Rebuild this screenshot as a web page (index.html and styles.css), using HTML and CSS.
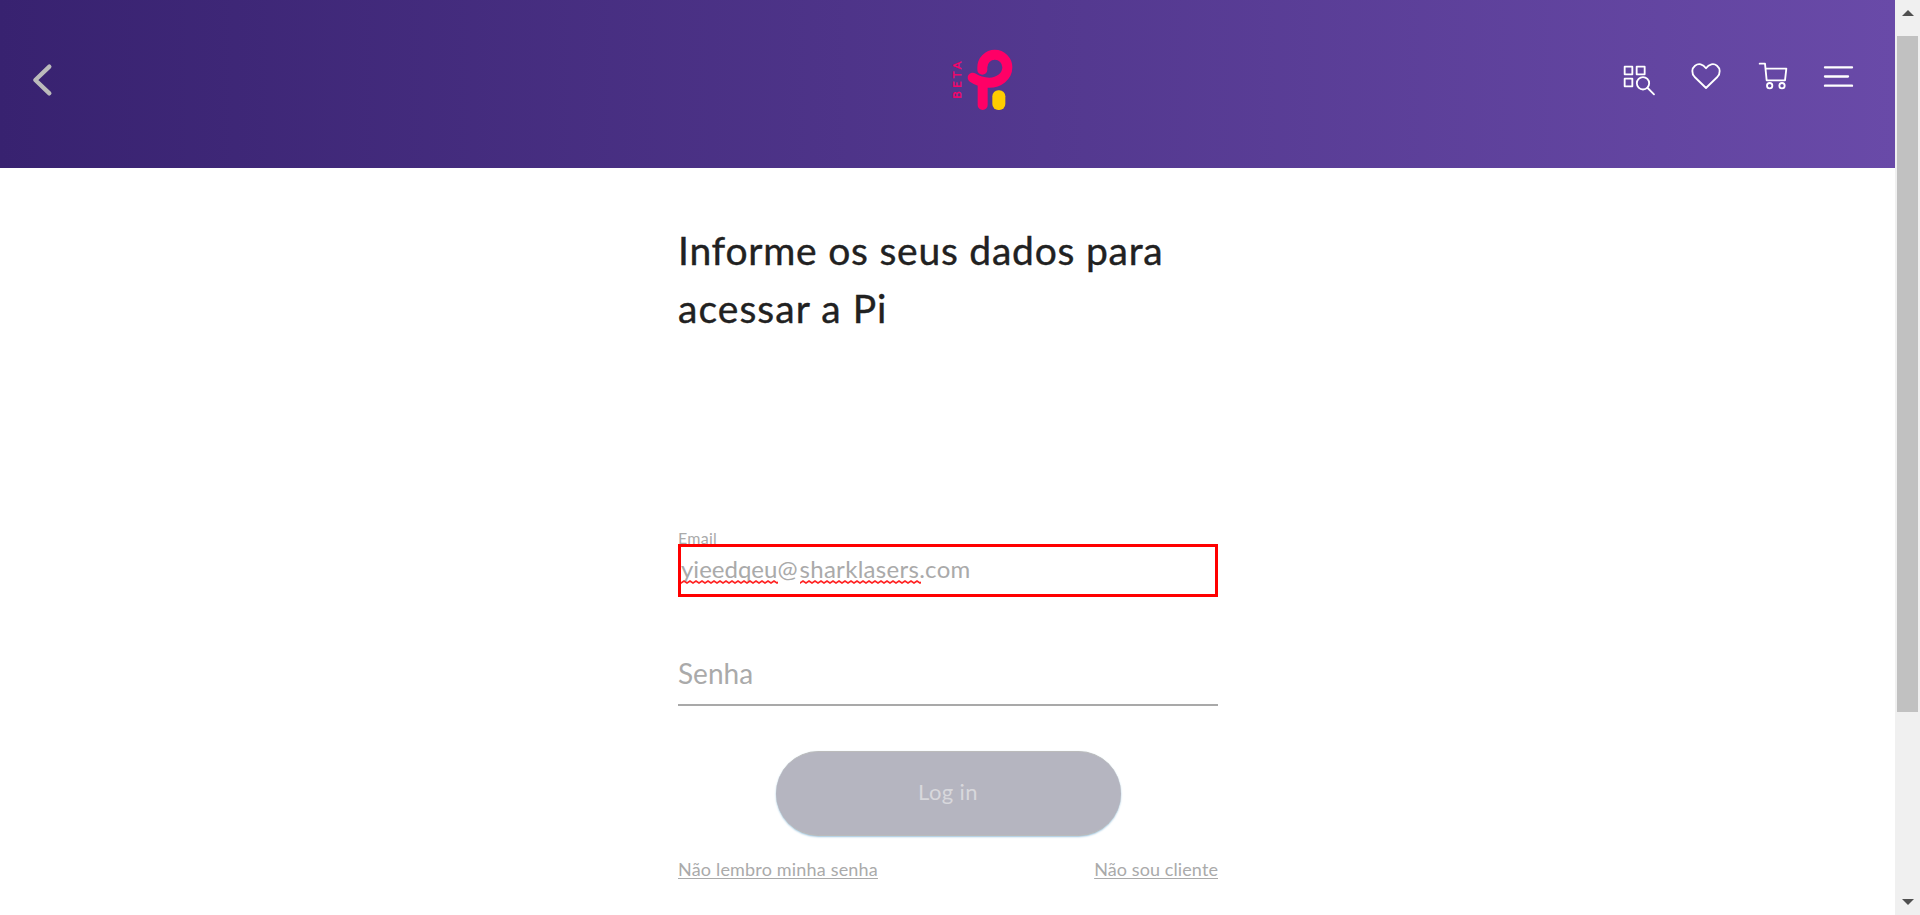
FILE: index.html
```html
<!DOCTYPE html>
<html lang="pt-BR">
<head>
<meta charset="utf-8">
<title>Pi - Login</title>
<link rel="stylesheet" href="styles.css">
</head>
<body>
<div class="page">
  <header class="header">
    <svg class="back" viewBox="0 0 300 240"><path d="M148 80L106 120L148 160"/></svg>
    <svg class="logo" viewBox="0 0 330 300">
      <text class="beta" transform="translate(93 206) rotate(-90)" textLength="112">BETA</text>
      <path class="pink" d="M157 119V112A37.500 37.500 0 0 1 232 112C232 140 206 158 178 158C158 158 144 154 128 143M158 166V225"/>
      <rect class="yellow" x="187" y="181" width="39" height="59" rx="18"/>
    </svg>
    <nav class="nav">
      <svg class="icon" viewBox="60 0 120 210"><path d="M74 80H97V103H74ZM110 80H134V103H110ZM74 116H97V139H74Z"/><circle cx="129" cy="130" r="18.5"/><path d="M143 144L162 163"/></svg>
      <svg class="icon" viewBox="255 0 120 210"><path d="M318 144L284 111C274 100 275 85 285 77C296 69 309 72 318 85C327 72 341 69 351 77C361 85 362 100 352 111Z"/></svg>
      <svg class="icon cart" viewBox="45 0 120 210"><path d="M59 71H75L80 121H135L139 86H77"/><circle cx="89" cy="137" r="8"/><circle cx="126" cy="137" r="8"/></svg>
      <svg class="icon menu" viewBox="240 0 120 210"><path d="M255 82H336M255 109.500H324M255 137H336"/></svg>
    </nav>
  </header>
  <main class="login">
    <h1 class="title"><span class="line one">Informe os seus dados para</span> <span class="line two">acessar a Pi</span></h1>
    <label class="label">Email</label>
    <div class="field"><span class="misspelled">yieedqeu<svg class="wave" width="97" height="4"><use href="#wave"/></svg></span><span class="domain"><span class="at">@</span><span class="misspelled">sharklasers<svg class="wave" width="121" height="4"><use href="#wave"/></svg></span>.com</span></div>
    <div class="password">Senha</div>
    <button class="submit">Log in</button>
    <div class="links"><a class="forgot">Não lembro minha senha</a><a class="signup">Não sou cliente</a></div>
  </main>
</div>
<aside class="scrollbar">
  <svg class="arrow" viewBox="0 0 12 6"><path d="M0 6L6 0L12 6Z"/></svg>
  <div class="thumb"></div>
  <svg class="arrow down" viewBox="0 0 12 6"><path d="M0 0L6 6L12 0Z"/></svg>
</aside>
<svg class="defs" width="0" height="0"><defs>
  <pattern id="zig" width="6" height="4" patternUnits="userSpaceOnUse"><path class="zig" d="M-1 2.300L0 3L3 1L6 3L7 2.300"/></pattern>
  <rect id="wave" width="130" height="4" fill="url(#zig)"/>
</defs></svg>
</body>
</html>
```
FILE: styles.css
```css
* { box-sizing: border-box; }
body {
  margin: 0;
  height: 915px;
  display: flex;
  overflow: hidden;
  background: #fff;
  font-family: Lato, "Open Sans", sans-serif;
}
.page { width: 1895px; }
.header {
  height: 168px;
  display: grid;
  grid-template-columns: 930px 110px 1fr;
  align-items: start;
  background: linear-gradient(90deg, #382270, #694aa8);
}
.back { width: 100px; height: 80px; margin-top: 40px; }
.back path { fill: none; stroke: #bbb; stroke-width: 13; stroke-linecap: round; stroke-linejoin: round; }
.logo { width: 110px; height: 100px; margin-top: 30px; }
.beta { font-size: 35px; fill: #ff0066; stroke: #ff0066; stroke-width: .7; }
.pink { fill: none; stroke: #ff0066; stroke-width: 30; stroke-linecap: round; }
.yellow { fill: #ffcc00; }
.nav { display: flex; justify-content: flex-end; gap: 25px; padding: 40px 35px 0 0; }
.icon { width: 40px; height: 70px; fill: none; stroke: #fff; stroke-width: 5.5; stroke-linecap: round; stroke-linejoin: round; }
.cart { margin-left: 5px; }
.menu { stroke-width: 7; }

.login { width: 540px; margin: 0 0 0 678px; display: flex; flex-direction: column; }
.title {
  margin: 53px 0 0;
  height: 116px;
  font-size: 39px;
  font-weight: 400;
  line-height: 58px;
  color: #212121;
  -webkit-text-stroke: .4px #212121;
}
.line { display: block; white-space: nowrap; }
.one { letter-spacing: .76px; }
.two { letter-spacing: 1.05px; }
.label { margin-top: 190px; height: 17px; font-size: 16px; line-height: 21px; letter-spacing: .25px; color: #aaa; }
.field {
  position: relative;
  height: 53px;
  border: 3px solid #f00;
  background: #fff;
  font-size: 24px;
  line-height: 44px;
  color: #aaa;
  white-space: nowrap;
}
.domain { letter-spacing: .3px; }
.at { letter-spacing: 2px; }
.misspelled { position: relative; }
.wave { position: absolute; left: 0; bottom: -1px; }
.zig { fill: none; stroke: #f22; stroke-width: 1.6; }
.password { margin-top: 49px; height: 60px; border-bottom: 2px solid #a9a9a9; font-size: 28px; line-height: 54px; color: #aaa; }
.submit {
  align-self: center;
  width: 345px;
  height: 85px;
  margin-top: 45px;
  padding: 0 0 4px;
  border: 1px solid #bbb;
  border-width: 1px 0;
  border-radius: 43px;
  background: #b5b5c0;
  box-shadow: 0 1px 2px #9fc4dd;
  font: 22px Lato, sans-serif;
  letter-spacing: .4px;
  color: #d8d8dc;
}
.links { display: flex; justify-content: space-between; margin-top: 21px; font-size: 18px; line-height: 24px; color: #aaa; }
.links a { text-decoration: underline; text-decoration-thickness: 1px; text-underline-offset: 2px; text-decoration-skip-ink: none; }
.forgot { letter-spacing: .18px; }
.signup { letter-spacing: .1px; }

.scrollbar { width: 25px; padding: 10px 2px; display: flex; flex-direction: column; align-items: center; background: #f0f0f0; }
.arrow { width: 12px; height: 6px; fill: #505050; }
.thumb { width: 21px; height: 676px; margin-top: 20px; background: #c1c1c1; }
.down { margin-top: auto; }
.defs { position: absolute; }
```
